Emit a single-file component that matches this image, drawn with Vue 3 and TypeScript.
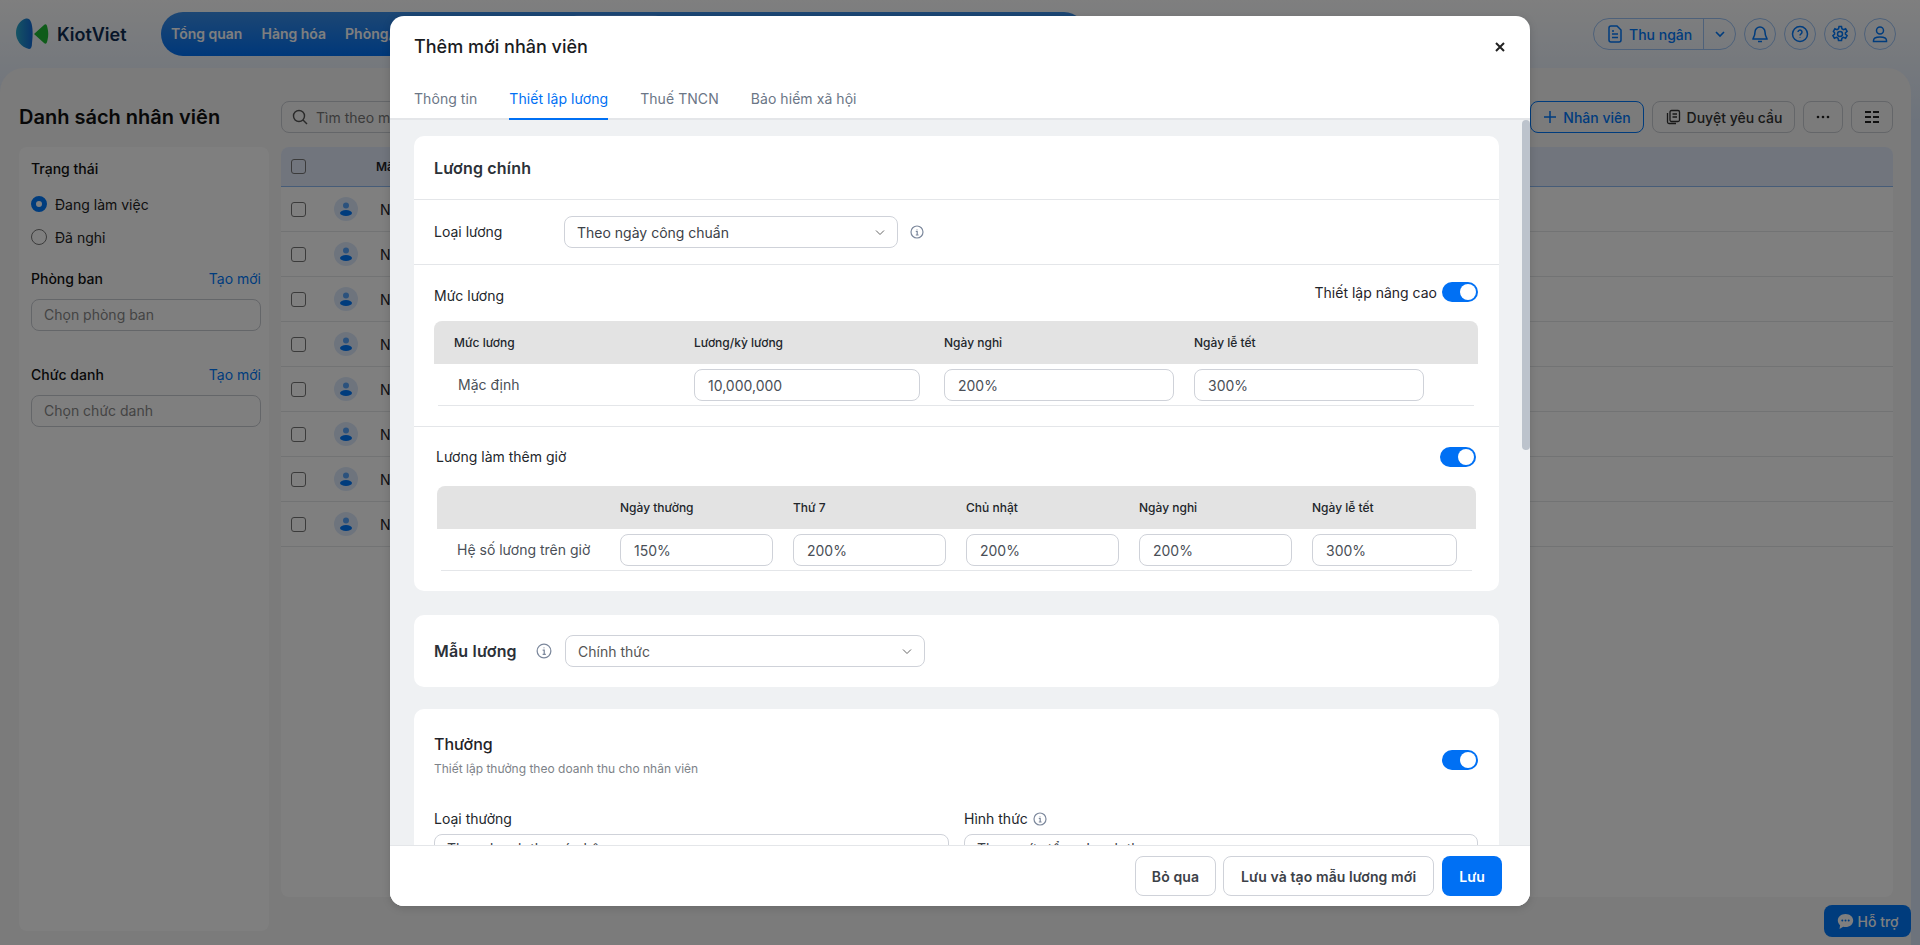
<template>
  <div class="page">
    <header class="topbar">
      <div class="logo">
        <svg width="33" height="32" viewBox="0 0 33 32">
          <defs>
            <linearGradient id="lg1" x1="0" y1="0" x2="1" y2="0">
              <stop offset="0" stop-color="#2aa8c8" />
              <stop offset="1" stop-color="#1268d6" />
            </linearGradient>
          </defs>
          <path d="M10 .5C4 2 0 8 0 15c0 7 5 14 13 16 2 0 3-2 3-6 1-7 1-16-1-21-1-3-3-4-5-3.500Z" fill="url(#lg1)" />
          <path d="M18 16l10-9c2-2 3 0 3.500 3 1 4 1 8 0 12-.5 3-1.500 5-3.500 3l-10-9Z" fill="#1fb835" />
        </svg>
        <span class="logo-text">KiotViet</span>
      </div>
      <nav class="nav">
        <a v-for="item in navItems" :key="item" class="nav-item">{{ item }}</a>
        <span class="nav-active"></span>
      </nav>
      <div class="top-actions">
        <div class="cashier">
          <span class="cashier-main">
            <svg width="16" height="18" viewBox="0 0 16 18" fill="none" stroke="#0078fb" stroke-width="1.500">
              <path d="M2 3a2 2 0 0 1 2-2h6l4 4v10a2 2 0 0 1-2 2H4a2 2 0 0 1-2-2V3Z" />
              <path d="M5 9h6M5 12.500h6M5 6h2" />
            </svg>
            Thu ngân
          </span>
          <span class="cashier-arrow">
            <svg width="12" height="12" viewBox="0 0 12 12" fill="none" stroke="#0078fb" stroke-width="1.600">
              <path d="M2 4l4 4 4-4" />
            </svg>
          </span>
        </div>
        <span class="round">
          <svg width="18" height="18" viewBox="0 0 18 18" fill="none" stroke="#0078fb" stroke-width="1.500">
            <path d="M9 2a5 5 0 0 0-5 5c0 4-2 6-2 7h14c0-1-2-3-2-7a5 5 0 0 0-5-5ZM7 16.500h4" />
          </svg>
        </span>
        <span class="round">
          <svg width="18" height="18" viewBox="0 0 18 18" fill="none" stroke="#0078fb" stroke-width="1.500">
            <circle cx="9" cy="9" r="7.500" />
            <path d="M7 7a2 2 0 1 1 3 1.800c-.7.400-1 .8-1 1.700M9 12.500v.5" />
          </svg>
        </span>
        <span class="round">
          <svg width="18" height="18" viewBox="0 0 18 18" fill="none" stroke="#0078fb" stroke-width="1.500">
            <circle cx="9" cy="9" r="2.500" />
            <path d="M7.500 1.500h3l.4 2.200 1.600.9 2.100-.8 1.500 2.600-1.700 1.400v1.400l1.700 1.400-1.500 2.600-2.100-.8-1.600.9-.4 2.200h-3l-.4-2.200-1.600-.9-2.100.8-1.500-2.600 1.700-1.400V7.800L2.400 6.400l1.500-2.600 2.100.8 1.600-.9.4-2.200Z" />
          </svg>
        </span>
        <span class="round">
          <svg width="18" height="18" viewBox="0 0 18 18" fill="none" stroke="#0078fb" stroke-width="1.500">
            <circle cx="9" cy="5.500" r="3.500" />
            <path d="M2.500 16.500v-1c0-2 2-3.500 6.500-3.500s6.500 1.500 6.500 3.500v1h-13Z" />
          </svg>
        </span>
      </div>
    </header>

    <main class="panel">
      <div class="toolbar">
        <h1 class="page-title">Danh sách nhân viên</h1>
        <div class="search">
          <svg width="16" height="16" viewBox="0 0 16 16" fill="none" stroke="#555" stroke-width="1.400">
            <circle cx="7" cy="7" r="5.500" />
            <path d="M11 11l4 4" />
          </svg>
          <span>Tìm theo mã, tên nhân viên</span>
        </div>
        <button class="tool-btn tool-primary">
          <svg width="14" height="14" viewBox="0 0 14 14" stroke="#0078fb" stroke-width="1.500">
            <path d="M7 1v12M1 7h12" />
          </svg>
          Nhân viên
        </button>
        <button class="tool-btn tool-wide">
          <svg width="16" height="16" viewBox="0 0 16 16" fill="none" stroke="#333" stroke-width="1.300">
            <rect x="5" y="1.500" width="9.500" height="11" rx="1.500" />
            <path d="M7.500 5h4.500M7.500 8h4.500M2.500 4v9a1.500 1.500 0 0 0 1.500 1.500h7" />
          </svg>
          Duyệt yêu cầu
        </button>
        <button class="tool-btn tool-more">
          <svg width="14" height="4" viewBox="0 0 14 4" fill="#222">
            <circle cx="2" cy="2" r="1.300" />
            <circle cx="7" cy="2" r="1.300" />
            <circle cx="12" cy="2" r="1.300" />
          </svg>
        </button>
        <button class="tool-btn tool-grid">
          <svg width="16" height="14" viewBox="0 0 16 14" fill="#222">
            <rect x="1" y="1" width="6" height="2" />
            <rect x="9" y="1" width="6" height="2" />
            <rect x="1" y="6" width="6" height="2" />
            <rect x="9" y="6" width="6" height="2" />
            <rect x="1" y="11" width="6" height="2" />
            <rect x="9" y="11" width="6" height="2" />
          </svg>
        </button>
      </div>

      <div class="content">
        <aside class="side">
          <div class="side-title">Trạng thái</div>
          <label class="radio"><i class="dot dot-on"></i>Đang làm việc</label>
          <label class="radio"><i class="dot"></i>Đã nghỉ</label>

          <div class="side-head">
            <span class="side-title">Phòng ban</span>
            <a class="side-link">Tạo mới</a>
          </div>
          <div class="side-input">Chọn phòng ban</div>

          <div class="side-head side-head-2">
            <span class="side-title">Chức danh</span>
            <a class="side-link">Tạo mới</a>
          </div>
          <div class="side-input">Chọn chức danh</div>
        </aside>

        <section class="list">
          <div class="list-head">
            <i class="check"></i>
            <span class="list-code">Mã</span>
          </div>
          <div v-for="n in 8" :key="n" class="list-row">
            <i class="check"></i>
            <span class="avatar">
              <svg width="14" height="14" viewBox="0 0 14 14" fill="#0078fb">
                <circle cx="7" cy="3.500" r="3" fill-opacity=".6" />
                <ellipse cx="7" cy="11" rx="6" ry="3" />
              </svg>
            </span>
            <span class="list-code-cell">N</span>
          </div>
        </section>
      </div>
    </main>

    <a class="support">
      <svg width="17" height="17" viewBox="0 0 17 17">
        <path d="M8.500 1C4 1 .8 3.900.8 7.500c0 1.900.9 3.500 2.300 4.700L2.500 16l3.700-2.200c.7.200 1.500.3 2.300.3 4.500 0 7.700-3 7.700-6.600S13 1 8.500 1Z" fill="#fff" />
        <circle cx="5.300" cy="7.500" r="1" fill="#0078fb" />
        <circle cx="8.500" cy="7.500" r="1" fill="#0078fb" />
        <circle cx="11.700" cy="7.500" r="1" fill="#0078fb" />
      </svg>
      Hỗ trợ
    </a>

    <div class="overlay"></div>

    <div class="modal">
      <div class="modal-head">
        <h2 class="modal-title">Thêm mới nhân viên</h2>
        <svg width="12" height="12" viewBox="0 0 12 12" stroke="#222" stroke-width="2">
          <path d="M2 2l8 8M10 2l-8 8" />
        </svg>
      </div>
      <div class="tabs">
        <span v-for="tab in tabs" :key="tab" class="tab" :class="{ 'tab-active': tab === 'Thiết lập lương' }">{{ tab }}</span>
      </div>

      <div class="modal-body">
        <div class="body-inner">
          <section class="card">
            <div class="card-title">Lương chính</div>
            <div class="salary-type">
              <span class="label type-label">Loại lương</span>
              <div class="select select-type">
                <span>Theo ngày công chuẩn</span>
                <svg width="12" height="12" viewBox="0 0 12 12" fill="none" stroke="#666" stroke-width="1">
                  <path d="M2 4.500L6 8.500l4-4" />
                </svg>
              </div>
              <svg class="info" width="14" height="14" viewBox="0 0 14 14" fill="none" stroke="#7c889c" stroke-width="1.200">
                <circle cx="7" cy="7" r="6" />
                <path d="M5.800 6.300H7.200V10M5.800 10h2.800M7 4v.6" />
              </svg>
            </div>

            <div class="level">
              <div class="level-head">
                <span class="label">Mức lương</span>
                <div class="advanced">
                  <span>Thiết lập nâng cao</span>
                  <i class="toggle"></i>
                </div>
              </div>
              <div class="grid-head level-grid">
                <span>Mức lương</span>
                <span>Lương/kỳ lương</span>
                <span>Ngày nghỉ</span>
                <span>Ngày lễ tết</span>
              </div>
              <div class="grid-row level-grid">
                <span class="row-name">Mặc định</span>
                <div class="input">10,000,000</div>
                <div class="input">200%</div>
                <div class="input">300%</div>
              </div>
            </div>

            <div class="overtime">
              <div class="overtime-head">
                <span class="label">Lương làm thêm giờ</span>
                <i class="toggle"></i>
              </div>
              <div class="grid-head ot-grid">
                <span></span>
                <span v-for="d in otDays" :key="d">{{ d }}</span>
              </div>
              <div class="grid-row ot-grid">
                <span class="row-name">Hệ số lương trên giờ</span>
                <div v-for="(v, i) in otValues" :key="i" class="input">{{ v }}</div>
              </div>
            </div>
          </section>

          <section class="card template">
            <span class="template-title">Mẫu lương</span>
            <svg width="16" height="16" viewBox="0 0 14 14" fill="none" stroke="#7c889c" stroke-width="1.100">
              <circle cx="7" cy="7" r="6" />
              <path d="M5.800 6.300H7.200V10M5.800 10h2.800M7 4v.6" />
            </svg>
            <div class="select select-template">
              <span>Chính thức</span>
              <svg width="12" height="12" viewBox="0 0 12 12" fill="none" stroke="#666" stroke-width="1">
                <path d="M2 4.500L6 8.500l4-4" />
              </svg>
            </div>
          </section>

          <section class="card bonus">
            <div class="bonus-head">
              <div>
                <div class="bonus-title">Thưởng</div>
                <div class="bonus-sub">Thiết lập thưởng theo doanh thu cho nhân viên</div>
              </div>
              <i class="toggle bonus-toggle"></i>
            </div>
            <div class="bonus-fields">
              <div>
                <div class="label field-label">Loại thưởng</div>
                <div class="select select-bonus"><span>Theo doanh thu cá nhân</span></div>
              </div>
              <div>
                <div class="label field-label">
                  Hình thức
                  <svg width="14" height="14" viewBox="0 0 14 14" fill="none" stroke="#7c889c" stroke-width="1.200">
                    <circle cx="7" cy="7" r="6" />
                    <path d="M5.800 6.300H7.200V10M5.800 10h2.800M7 4v.6" />
                  </svg>
                </div>
                <div class="select select-bonus"><span>Theo mức tổng doanh thu</span></div>
              </div>
            </div>
          </section>
        </div>
        <div class="scroll-thumb"></div>
      </div>

      <div class="modal-foot">
        <button class="btn btn-skip">Bỏ qua</button>
        <button class="btn">Lưu và tạo mẫu lương mới</button>
        <button class="btn btn-primary">Lưu</button>
      </div>
    </div>
  </div>
</template>

<script setup lang="ts">
const navItems: string[] = ["Tổng quan", "Hàng hóa", "Phòng/Bàn"];
const tabs: string[] = ["Thông tin", "Thiết lập lương", "Thuế TNCN", "Bảo hiểm xã hội"];
const otDays: string[] = ["Ngày thường", "Thứ 7", "Chủ nhật", "Ngày nghỉ", "Ngày lễ tết"];
const otValues: string[] = ["150%", "200%", "200%", "200%", "300%"];
</script>

<style>
html,
body {
  margin: 0;
  height: 100%;
  overflow: hidden;
}
</style>

<style scoped>
.page {
  position: relative;
  height: 945px;
  overflow: hidden;
  font-family: Inter, "Noto Sans", sans-serif;
  font-size: 14px;
  color: #1f2329;
  background: linear-gradient(to bottom, #fefefe, #dbe7f8 120px);
}

/* top bar */
.topbar {
  display: flex;
  align-items: center;
  height: 68px;
  padding: 0 24px 0 16px;
  box-sizing: border-box;
}

.logo {
  display: flex;
  align-items: center;
  gap: 8px;
  width: 145px;
}

.logo-text {
  font-size: 18px;
  font-weight: 600;
  color: #0f2d52;
}

.nav {
  position: relative;
  display: flex;
  align-items: center;
  gap: 19px;
  width: 925px;
  height: 44px;
  margin-bottom: 1px;
  padding-left: 10px;
  box-sizing: border-box;
  border-radius: 22px;
  background: linear-gradient(to bottom, #3a8ee8, #0070f4);
}

.nav-item {
  font-size: 14px;
  font-weight: 600;
  color: #fff;
  white-space: nowrap;
}

.nav-active {
  position: absolute;
  left: 400px;
  top: 3px;
  width: 110px;
  height: 38px;
  border-radius: 19px;
  background: #5aa0f2;
}

.top-actions {
  display: flex;
  align-items: center;
  gap: 8px;
  margin-left: auto;
}

.cashier {
  display: flex;
  height: 32px;
  box-sizing: border-box;
  border: 1px solid #9cc3f5;
  border-radius: 16px;
  color: #0078fb;
  font-weight: 500;
  font-size: 14px;
}

.cashier-main {
  display: flex;
  align-items: center;
  gap: 6px;
  width: 110px;
  padding-left: 13px;
  box-sizing: border-box;
  border-right: 1px solid #9cc3f5;
}

.cashier-arrow {
  display: flex;
  align-items: center;
  justify-content: center;
  width: 31px;
}

.round {
  display: flex;
  align-items: center;
  justify-content: center;
  width: 32px;
  height: 32px;
  box-sizing: border-box;
  border: 1px solid #9cc3f5;
  border-radius: 50%;
}

/* list page */
.panel {
  height: 877px;
  margin-right: 9px;
  padding: 33px 18px 0 19px;
  box-sizing: border-box;
  border-radius: 24px 24px 0 0;
  background: #f6f6f6;
}

.toolbar {
  display: flex;
  align-items: center;
  gap: 8px;
  height: 32px;
}

.page-title {
  width: 254px;
  margin: 0;
  font-size: 20px;
  font-weight: 600;
  color: #111;
}

.search {
  display: flex;
  flex: 1;
  align-items: center;
  gap: 8px;
  height: 32px;
  padding-left: 10px;
  box-sizing: border-box;
  border: 1px solid #c9ccd2;
  border-radius: 8px;
  color: #777;
}

.tool-btn {
  display: flex;
  align-items: center;
  justify-content: center;
  gap: 6px;
  height: 32px;
  padding: 0;
  box-sizing: border-box;
  border: 1px solid #c9ccd2;
  border-radius: 8px;
  background: #f6f6f6;
  font-family: inherit;
  font-size: 14px;
  font-weight: 500;
  color: #333;
}

.tool-primary {
  width: 114px;
  border-color: #0078fb;
  color: #0078fb;
}

.tool-wide {
  width: 143px;
}

.tool-more {
  width: 40px;
}

.tool-grid {
  width: 42px;
}

.content {
  display: flex;
  align-items: flex-start;
  gap: 12px;
  margin-top: 14px;
}

.side {
  width: 250px;
  height: 784px;
  padding: 12px 8px 0 12px;
  box-sizing: border-box;
  border-radius: 8px;
  background: #fff;
}

.side-title {
  font-weight: 500;
  color: #111;
  line-height: 20px;
}

.radio {
  display: flex;
  align-items: center;
  gap: 8px;
  height: 20px;
  margin-top: 13px;
  color: #222;
}

.radio:first-of-type {
  margin-top: 15px;
}

.dot {
  width: 16px;
  height: 16px;
  box-sizing: border-box;
  border: 1px solid #777;
  border-radius: 50%;
}

.dot-on {
  border: 5px solid #0078fb;
  background: #fff;
}

.side-head {
  display: flex;
  justify-content: space-between;
  margin-top: 22px;
}

.side-head-2 {
  margin-top: 34px;
}

.side-link {
  color: #0078fb;
  line-height: 20px;
}

.side-input {
  height: 32px;
  margin-top: 10px;
  padding-left: 12px;
  box-sizing: border-box;
  border: 1px solid #c9ccd2;
  border-radius: 8px;
  color: #888;
  line-height: 30px;
}

.list {
  flex: 1;
  height: 750px;
  border-radius: 8px;
  background: #fff;
}

.list-head {
  display: flex;
  align-items: center;
  height: 40px;
  padding-left: 10px;
  box-sizing: border-box;
  border-radius: 8px 8px 0 0;
  border-bottom: 1px solid #8db8f0;
  background: #e2eafa;
  font-size: 12px;
  font-weight: 600;
}

.list-code {
  margin-left: 70px;
}

.list-row {
  display: flex;
  align-items: center;
  height: 45px;
  padding-left: 10px;
  box-sizing: border-box;
  border-bottom: 1px solid #e5e6e8;
}

.check {
  width: 15px;
  height: 15px;
  box-sizing: border-box;
  border: 1px solid #777;
  border-radius: 3px;
}

.avatar {
  display: flex;
  align-items: center;
  justify-content: center;
  width: 24px;
  height: 24px;
  margin-left: 28px;
  border-radius: 50%;
  background: #dde9fb;
}

.list-code-cell {
  margin-left: 22px;
}

.support {
  position: absolute;
  right: 9px;
  top: 905px;
  display: flex;
  align-items: center;
  justify-content: center;
  gap: 4px;
  width: 87px;
  height: 32px;
  border-radius: 8px;
  background: #0078fb;
  color: #fff;
  font-weight: 500;
}

.overlay {
  position: absolute;
  inset: 0;
  background: rgb(0 0 0 / 50%);
}

/* modal */
.modal {
  position: absolute;
  left: 390px;
  top: 16px;
  display: flex;
  flex-direction: column;
  width: 1140px;
  height: 890px;
  border-radius: 14px;
  overflow: hidden;
  background: #fff;
  box-shadow: 0 2px 8px rgb(0 0 0 / 15%);
}

.modal-head {
  display: flex;
  align-items: center;
  justify-content: space-between;
  height: 61px;
  padding: 0 24px;
  flex: none;
}

.modal-title {
  margin: 0;
  font-size: 18px;
  font-weight: 500;
  color: #1a1c1f;
}

.tabs {
  display: flex;
  gap: 32px;
  height: 43px;
  padding: 0 24px;
  flex: none;
  box-sizing: border-box;
  border-bottom: 2px solid #e4e6e9;
}

.tab {
  margin-bottom: -2px;
  padding-top: 12px;
  box-sizing: border-box;
  border-bottom: 2px solid transparent;
  color: #6b7686;
  line-height: 20px;
  letter-spacing: .06px;
}

.tab-active {
  border-bottom-color: #0070f4;
  color: #0070f4;
}

.modal-body {
  position: relative;
  flex: 1;
  overflow: hidden;
  background: #eff1f3;
}

.body-inner {
  display: flex;
  flex-direction: column;
  gap: 24px;
  padding: 16px 31px 0 24px;
}

.scroll-thumb {
  position: absolute;
  right: 0;
  top: 0;
  width: 8px;
  height: 330px;
  border-radius: 4px;
  background: #bcc3cc;
}

.card {
  border-radius: 10px;
  background: #fff;
}

.card-title {
  display: flex;
  align-items: center;
  height: 64px;
  padding: 0 20px;
  box-sizing: border-box;
  border-bottom: 1px solid #e4e6e9;
  font-size: 16px;
  font-weight: 600;
  letter-spacing: .2px;
  color: #2c3138;
}

.label {
  color: #22262b;
  line-height: 20px;
}

.salary-type {
  display: flex;
  align-items: center;
  height: 65px;
  padding: 0 20px;
  box-sizing: border-box;
  border-bottom: 1px solid #e4e6e9;
}

.type-label {
  width: 130px;
}

.select {
  display: flex;
  align-items: center;
  justify-content: space-between;
  height: 32px;
  padding: 0 11px 0 12px;
  box-sizing: border-box;
  border: 1px solid #cfd2d9;
  border-radius: 8px;
  color: #3c4148;
}

.select-type {
  width: 334px;
}

.info {
  margin-left: 12px;
}

.level {
  padding: 18px 21px 0 20px;
}

.level-head {
  display: flex;
  align-items: center;
  justify-content: space-between;
  height: 38px;
  padding-bottom: 12px;
  box-sizing: border-box;
}

.advanced {
  display: flex;
  align-items: center;
  gap: 5px;
  margin-top: -8px;
}

.toggle {
  position: relative;
  display: block;
  width: 36px;
  height: 20px;
  border-radius: 10px;
  background: #0070f4;
}

.toggle::after {
  content: "";
  position: absolute;
  top: 2px;
  right: 2px;
  width: 16px;
  height: 16px;
  border-radius: 50%;
  background: #fff;
}

.grid-head {
  display: grid;
  align-items: center;
  height: 43px;
  border-radius: 8px 8px 0 0;
  background: #e3e3e3;
  font-size: 12px;
  font-weight: 500;
  color: #22262b;
}

.grid-row {
  display: grid;
  align-items: start;
  height: 42px;
  margin: 0 4px;
  padding-top: 5px;
  box-sizing: border-box;
  border-bottom: 1px solid #e4e6e9;
}

.level-grid.grid-head {
  grid-template-columns: 240px 250px 250px 1fr;
  padding-left: 20px;
}

.level-grid.grid-row {
  grid-template-columns: 236px 250px 250px 230px;
  padding-left: 20px;
}

.level-grid .input {
  width: 230px;
}

.level-grid .input:nth-child(2) {
  width: 226px;
}

.row-name {
  color: #4a4f57;
  line-height: 32px;
}

.input {
  display: flex;
  align-items: center;
  height: 32px;
  padding-left: 13px;
  box-sizing: border-box;
  border: 1px solid #cfd2d9;
  border-radius: 8px;
  color: #4a4f57;
}

.overtime {
  margin-top: 20px;
  padding: 0 23px 20px;
  border-top: 1px solid #e4e6e9;
}

.overtime-head {
  display: flex;
  align-items: center;
  justify-content: space-between;
  height: 59px;
  margin-left: -1px;
}

.ot-grid.grid-head {
  grid-template-columns: 183px repeat(4, 173px) 1fr;
}

.ot-grid.grid-row {
  grid-template-columns: 143px repeat(5, 153px);
  column-gap: 20px;
  padding-left: 16px;
}

.ot-grid .input:last-child {
  width: 145px;
}

.template {
  display: flex;
  align-items: center;
  height: 72px;
  padding: 0 20px;
  box-sizing: border-box;
}

.template-title {
  width: 102px;
  font-size: 16px;
  font-weight: 600;
  letter-spacing: .2px;
  color: #2c3138;
}

.select-template {
  width: 360px;
  margin-left: 13px;
  color: #555;
}

.bonus {
  margin-top: -2px;
  padding: 23px 21px 20px 20px;
}

.bonus-head {
  display: flex;
  align-items: center;
  justify-content: space-between;
}

.bonus-toggle {
  margin-top: 10px;
}

.bonus-title {
  font-size: 16px;
  font-weight: 500;
  line-height: 24px;
}

.bonus-sub {
  margin-top: 5px;
  font-size: 12px;
  color: #7d8288;
  line-height: 16px;
}

.bonus-fields {
  display: grid;
  grid-template-columns: 515px 514px;
  column-gap: 15px;
  margin-top: 32px;
}

.field-label {
  display: flex;
  align-items: center;
  gap: 5px;
}

.select-bonus {
  margin-top: 5px;
  padding-bottom: 4px;
}

.modal-foot {
  position: absolute;
  left: 0;
  right: 0;
  bottom: 0;
  display: flex;
  justify-content: flex-end;
  gap: 8px;
  height: 61px;
  padding: 10px 28px 0 0;
  box-sizing: border-box;
  border-top: 1px solid #e4e6e9;
  background: #fff;
}

.btn {
  height: 40px;
  padding: 0 17px;
  box-sizing: border-box;
  border: 1px solid #cfd2d9;
  border-radius: 8px;
  background: #fff;
  font-family: inherit;
  font-size: 14px;
  font-weight: 600;
  letter-spacing: .1px;
  color: #3c4148;
}

.btn-skip {
  margin-right: -1px;
  padding: 0 16px;
}

.btn-primary {
  border: none;
  background: #0070f4;
  color: #fff;
}
</style>
